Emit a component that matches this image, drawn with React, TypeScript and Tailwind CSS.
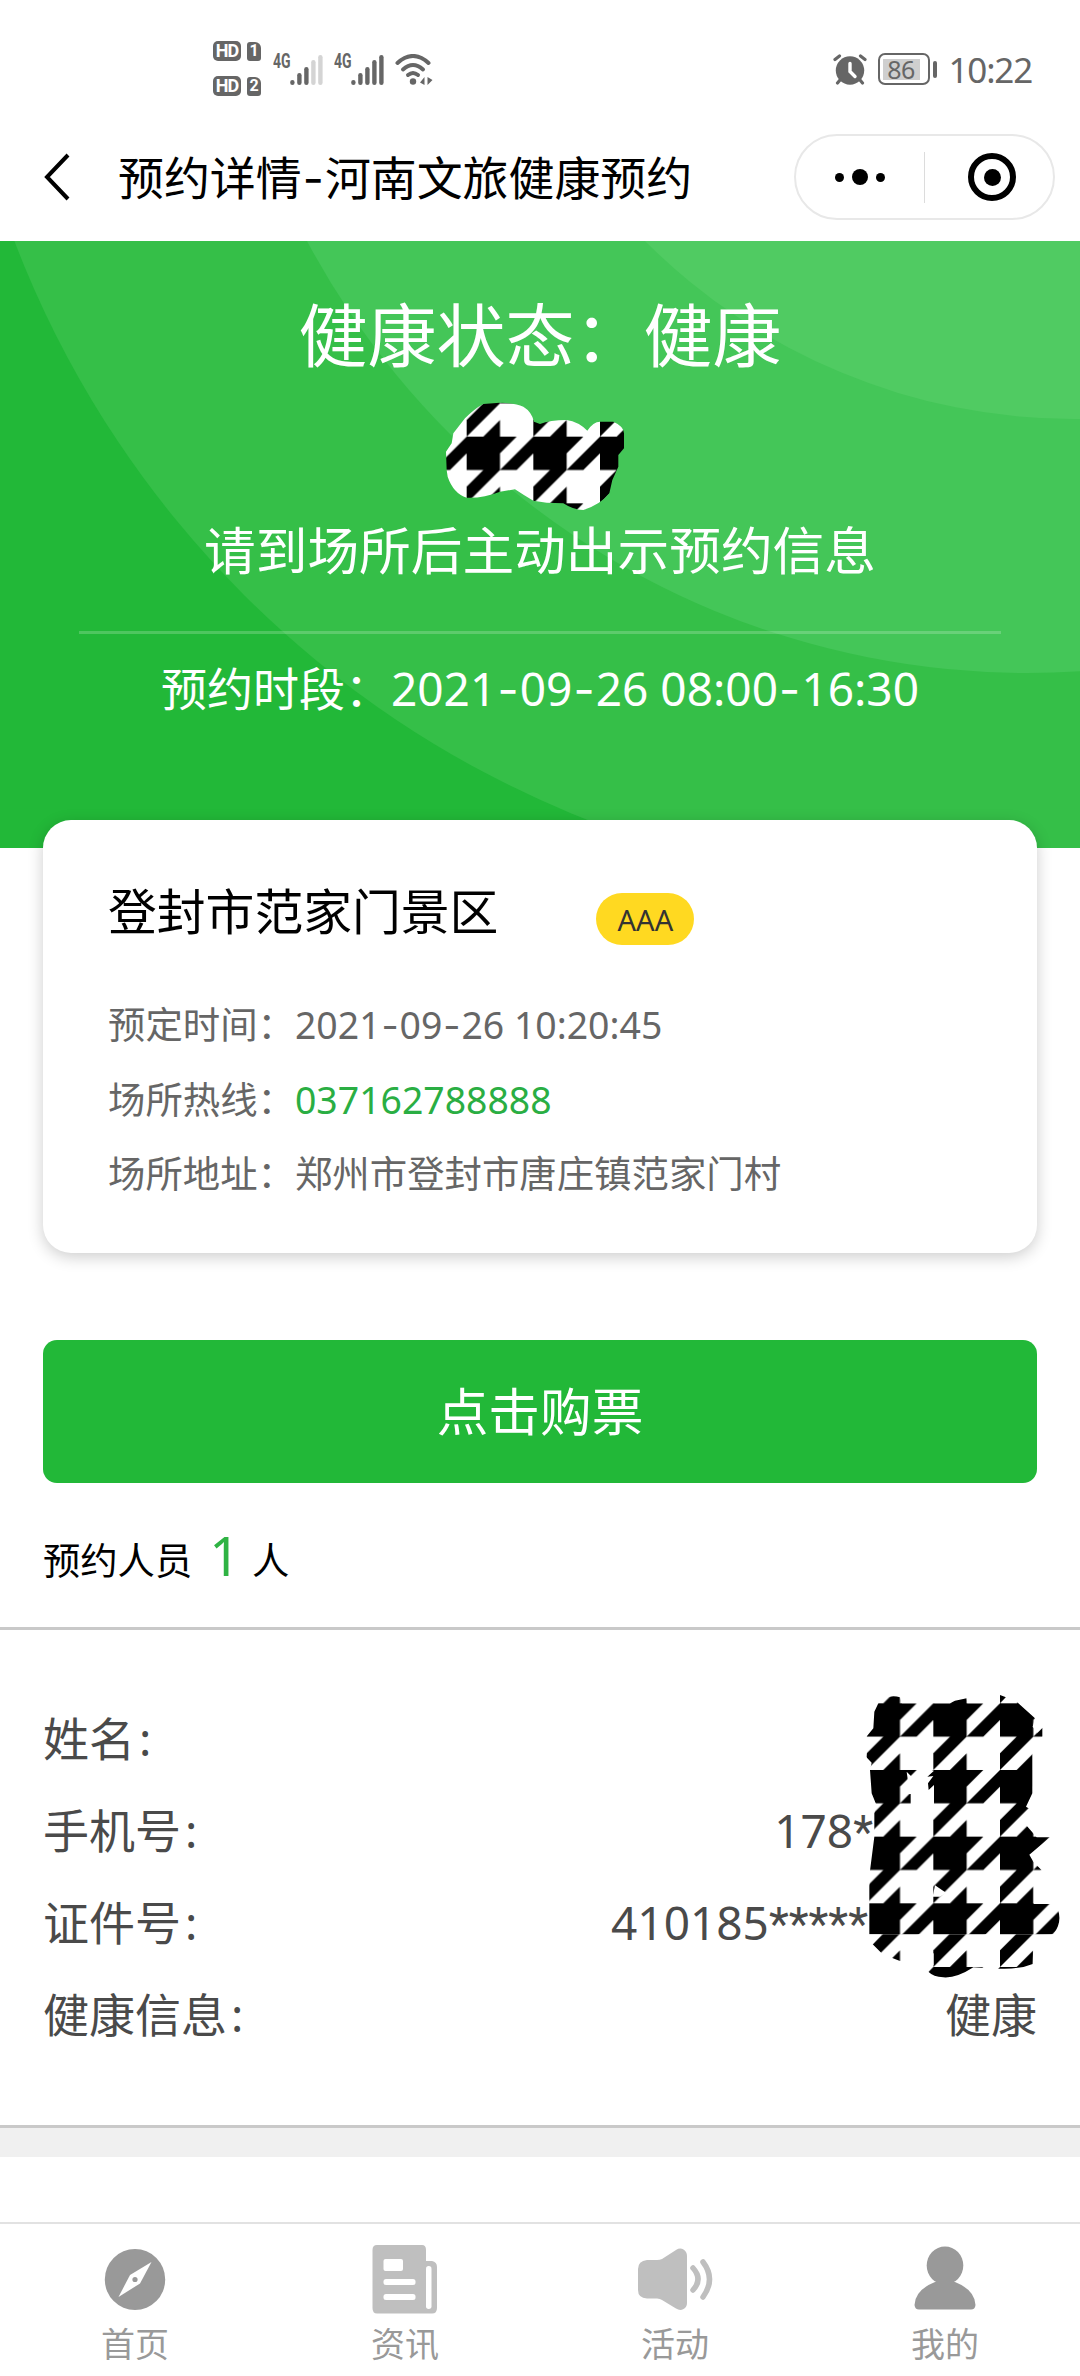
import React from 'react';

const HOUNDSTOOTH_TOP =
  'M140 270 L138 215 L155 190 L160 160 L195 115 Q225 85 250 72 L300 68 Q345 70 370 80 Q395 95 402 125 L420 132 Q450 120 500 120 Q535 125 562 152 Q580 125 600 125 L640 125 Q675 140 672 165 L672 205 L655 225 L655 260 L637 300 L628 340 Q600 375 550 390 Q520 390 490 370 L440 368 L400 362 Q370 345 345 328 L300 335 Q250 355 200 353 Q160 340 143 290 Z';

const HOUNDSTOOTH_SIDE =
  'M78 232 L100 205 L103 155 L115 130 Q145 100 180 112 L186 130 L330 130 L345 122 L380 115 L382 130 L480 130 L480 105 L498 112 L484 128 L530 125 L585 175 L578 200 L592 218 L607 203 L607 230 L577 240 L577 400 L558 440 L568 446 L545 480 L590 532 L630 532 L568 584 L580 605 L605 631 L581 640 L581 732 L635 732 L655 752 Q666 790 640 823 L581 825 L578 912 Q540 928 480 926 L400 922 Q350 955 310 952 Q280 950 265 935 L281 915 L281 880 L180 903 L155 893 L165 872 L125 880 L98 853 L125 823 L88 823 L88 680 L90 632 L103 530 L103 460 L108 432 L95 400 L90 330 L95 308 L78 290 L82 270 L120 232 Z';

const HoundstoothPattern: React.FC<{ id: string; shift?: number }> = ({ id, shift = 0 }) => (
  <pattern
    id={id}
    patternUnits="userSpaceOnUse"
    width="200"
    height="200"
    patternTransform={`translate(466.67 ${436.67 - shift}) scale(0.33333)`}
  >
    <rect width="200" height="200" fill="#fff" />
    <path
      fill="#000"
      d="M0 0H150L100 50V100H0Z M100 100H150L200 50V0Z M50 100H100L0 200V150Z M50 200L100 150V200Z"
    />
  </pattern>
);

const TopMask = () => (
  <svg width="280" height="154" viewBox="400 370 280 154">
    <defs>
      <HoundstoothPattern id="ht-top" />
      <clipPath id="clip-top">
        <path d={HOUNDSTOOTH_TOP} transform="translate(400 380) scale(0.33333)" />
      </clipPath>
    </defs>
    <rect x="400" y="370" width="280" height="154" fill="url(#ht-top)" clipPath="url(#clip-top)" />
  </svg>
);

const SideMask = () => (
  <svg className="absolute left-[840px] top-[30px]" width="240" height="340" viewBox="840 1660 240 340">
    <defs>
      <HoundstoothPattern id="ht-side" />
      <HoundstoothPattern id="ht-side-low" shift={3} />
      <clipPath id="clip-side">
        <path d={HOUNDSTOOTH_SIDE} transform="translate(840 1660) scale(0.33333)" />
      </clipPath>
    </defs>
    <g clipPath="url(#clip-side)">
      <rect x="840" y="1660" width="240" height="274.4" fill="url(#ht-side)" />
      <rect x="840" y="1934.4" width="240" height="66" fill="url(#ht-side-low)" />
      <g fill="#fff" transform="translate(840 1660) scale(0.33333)">
        <path d="M200 335L215 350L235 332H282L262 350L280 348L264 370L266 390L282 375V434H212V402L188 402L205 372Z" />
        <path d="M285 676L318 698L300 710H278Z" />
      </g>
    </g>
  </svg>
);

// Inter's hyphen is longer and sits higher, which suits the dates
const Num: React.FC<{ value: string }> = ({ value }) => (
  <>
    {value.split('-').map((part, i) => (
      <React.Fragment key={i}>
        {i > 0 && <span className="mx-[0.025em] font-['Inter',sans-serif]">-</span>}
        {part}
      </React.Fragment>
    ))}
  </>
);

const HdBadge: React.FC<{ sim: string }> = ({ sim }) => (
  <div className="flex items-center gap-1.5 font-['Roboto',sans-serif] font-bold text-white">
    <span className="flex h-5 w-7 items-center justify-center rounded-[5px] bg-[#666] text-[18px] leading-none tracking-tighter">HD</span>
    <span className="flex h-[19px] w-3.5 items-center justify-center rounded-[3px] rounded-tr-[6px] bg-[#666] text-[16px] leading-none">{sim}</span>
  </div>
);

const Signal: React.FC<{ level: number }> = ({ level }) => (
  <div className="flex items-start">
    <span className="w-[17px] origin-left scale-x-[0.7] font-['Roboto',sans-serif] text-[20px] font-bold leading-[14px] text-[#666]">4G</span>
    <svg width="33" height="31" viewBox="0 0 33 31">
      {[5, 12, 18, 25, 30].map((h, i) => (
        <rect key={i} x={i * 7 + 0.2} y={31 - h} width="4.4" height={h} rx="2.2" fill={i < level ? '#666' : '#d4d4d4'} />
      ))}
    </svg>
  </div>
);

const Wifi = () => (
  <svg width="38" height="31" viewBox="0 0 38 31" fill="none" stroke="#666" strokeWidth="4" strokeLinecap="round">
    <path d="M2.5 9Q18 -5 33.5 9" />
    <path d="M8 15.5Q18 6.5 28 15.5" />
    <path d="M13 21Q18 17 23 21" />
    <circle cx="18" cy="27.5" r="3.2" fill="#666" stroke="none" />
    <path d="M29.5 23V31L25 28.5ZM32.5 31V23L37.5 26Z" fill="#666" stroke="none" />
  </svg>
);

const AlarmClock = () => (
  <svg width="34" height="31" viewBox="0 0 34 31" fill="none" stroke="#666" strokeLinecap="round">
    <circle cx="17" cy="16.5" r="14.2" fill="#666" stroke="none" />
    <path d="M2 5.5L6.5 2M32 5.5L27.5 2" strokeWidth="3.2" />
    <path d="M7 26L4.5 29M27 26L29.5 29" strokeWidth="3.2" />
    <path d="M17 9.5V17.5L22 22.5" stroke="#fff" strokeWidth="3.4" />
  </svg>
);

const StatusBar = () => (
  <div className="flex h-[120px] items-center justify-between pl-[213px] pr-[48px] pt-[18px]">
    <div className="flex items-center">
      <div className="mt-[-1px] flex flex-col gap-[15px]">
        <HdBadge sim="1" />
        <HdBadge sim="2" />
      </div>
      <div className="ml-3 flex items-center gap-[11px]">
        <Signal level={3} />
        <Signal level={5} />
        <Wifi />
      </div>
    </div>
    <div className="flex items-center text-[#666]">
      <AlarmClock />
      <div className="ml-[11px] flex h-8 w-[52px] items-center rounded-[7px] border-[2.5px] border-[#666] pl-[3px]">
        <span className="flex h-[21px] w-[37px] items-center justify-center bg-[#cfcfcf] text-[25px] leading-none tracking-tight">86</span>
      </div>
      <div className="ml-[3px] h-[17px] w-1 rounded-sm bg-[#666]" />
      <span className="ml-[12px] text-[35px] leading-none tracking-[-1.2px]">10:22</span>
    </div>
  </div>
);

const NavBar = () => (
  <div className="flex h-[121px] items-center justify-between pb-[7px] pl-[43px] pr-[25px]">
    <div className="flex items-center">
      <svg width="28" height="48" viewBox="0 0 28 48" fill="none" stroke="#000" strokeWidth="4">
        <path d="M25 2L4 24L25 46" />
      </svg>
      <h1 className="ml-[47px] mt-[2px] text-[45.9px] leading-none text-black">
        <Num value="预约详情-河南文旅健康预约" />
      </h1>
    </div>
    <div className="flex h-[86px] w-[261px] items-center rounded-full border-2 border-[#e8e8e8]">
      <div className="flex w-32 items-center justify-center gap-2">
        <i className="size-[9px] rounded-full bg-black" />
        <i className="size-4 rounded-full bg-black" />
        <i className="size-[9px] rounded-full bg-black" />
      </div>
      <div className="h-[51px] w-px bg-[#dcdcdc]" />
      <div className="flex w-32 items-center justify-center pl-[6px]">
        <div className="flex size-12 items-center justify-center rounded-full border-[6px] border-black">
          <i className="size-[17px] rounded-full bg-black" />
        </div>
      </div>
    </div>
  </div>
);

const Banner = () => (
  <div className="relative h-[607px] overflow-hidden bg-[#22b838] text-white">
    <svg className="absolute inset-0" width="1080" height="607" viewBox="0 241 1080 607">
      <circle cx="957" cy="-119" r="1009" fill="#35bf48" />
      <circle cx="1027" cy="-143" r="816" fill="#44c658" />
      <circle cx="1074" cy="-187" r="606" fill="#50cb62" />
    </svg>
    <div className="relative flex flex-col items-center pt-[59px]">
      <p className="text-[69px] leading-[70px]">健康状态：健康</p>
      <TopMask />
      <p className="text-[51.7px] leading-[52px]">请到场所后主动出示预约信息</p>
      <div className="mt-[55px] h-[3px] w-[922px] bg-white/20" />
      <p className="mt-[31px] whitespace-nowrap text-[46px] leading-[46px]">
        预约时段：<Num value="2021-09-26 08:00-16:30" />
      </p>
    </div>
  </div>
);

const details = [
  { label: '预定时间：', value: '2021-09-26 10:20:45' },
  { label: '场所热线：', value: '037162788888', link: true },
  { label: '场所地址：', value: '郑州市登封市唐庄镇范家门村' },
];

const PlaceCard = () => (
  <div className="relative mx-[43px] -mt-7 h-[433px] rounded-[28px] bg-white px-[65px] pt-[57px] shadow-[0_4px_16px_rgba(0,0,0,0.2)]">
    <div className="flex items-center">
      <h2 className="text-[48.8px] leading-[54px] text-black">登封市范家门景区</h2>
      <span className="ml-[98px] mt-4 flex h-[52px] w-[98px] items-center justify-center rounded-full bg-[#ffd921] text-[29px] leading-none text-[#333]">
        AAA
      </span>
    </div>
    <div className="mt-[43px] text-[37.4px] leading-[74px] text-[#666]">
      {details.map(({ label, value, link }) => (
        <div key={label} className="flex">
          <span>{label}</span>
          <span className={link ? 'text-[#2aae43]' : ''}>
            <Num value={value} />
          </span>
        </div>
      ))}
    </div>
  </div>
);

const person = [
  { label: '姓名', value: '', pad: '' },
  { label: '手机号', value: '178*', pad: 'pr-[207px]' },
  { label: '证件号', value: '410185*****', pad: 'pr-[212px]' },
  { label: '健康信息', value: '健康', pad: 'pr-[43px]' },
];

const PersonInfo = () => (
  <div className="relative border-b-[3px] border-[#c9c9c9] pb-[65px] pt-[62px] text-[46px] leading-[92px] text-[#4a4a4a]">
    {person.map(({ label, value, pad }) => {
      const stars = value.indexOf('*');
      return (
        <div key={label} className={`flex h-[92px] justify-between pl-[43px] ${pad}`}>
          <span>
            {label}
            <span className="ml-1">:</span>
          </span>
          <span>
            {stars < 0 ? value : value.slice(0, stars)}
            {stars >= 0 && <span className="font-['Roboto',sans-serif]">{value.slice(stars)}</span>}
          </span>
        </div>
      );
    })}
    <SideMask />
  </div>
);

const CompassIcon = () => (
  <svg width="62" height="70" viewBox="0 0 62 70">
    <ellipse cx="31" cy="35.5" rx="30.2" ry="30.5" fill="#999" />
    <path d="M47.5 18L36 39.5L14.5 53L26 31Z" fill="#fff" />
    <circle cx="31" cy="35.5" r="2.6" fill="#999" />
  </svg>
);

const NewsIcon = () => (
  <svg width="66" height="70" viewBox="0 0 66 70">
    <path d="M5 1H50Q54 1 54 6V17H60Q65 18 65 23V64Q65 69.5 60 69.5H5Q0.5 69.5 0.5 64V6Q0.5 1 5 1Z" fill="#bfbfbf" />
    <rect x="11.5" y="15" width="19.5" height="12" rx="2" fill="#fff" />
    <rect x="11.5" y="35" width="32" height="6" rx="2.5" fill="#fff" />
    <rect x="11.5" y="50" width="32" height="6" rx="2.5" fill="#fff" />
    <rect x="54" y="22" width="5.5" height="43" rx="2.7" fill="#fff" />
  </svg>
);

const SpeakerIcon = () => (
  <svg width="76" height="70" viewBox="0 0 76 70">
    <path d="M10 16H20Q23 16 25 15L39 6Q43 3.5 46.5 5.5Q50 7.5 50 12V59Q50 63 46.5 65Q43 67 39 64.5L25 56Q23 54.5 20 54.5H10Q1 54 1 46V25Q1 17 10 16Z" fill="#bfbfbf" />
    <path d="M56 24Q66 35 56 46M66 18Q79 35 66 53" fill="none" stroke="#bfbfbf" strokeWidth="5.5" strokeLinecap="round" />
  </svg>
);

const UserIcon = () => (
  <svg width="62" height="70" viewBox="0 0 62 70" fill="#999">
    <ellipse cx="31" cy="21.5" rx="18.3" ry="19" />
    <path d="M21 38H41Q61 46 61.5 61Q61 65.5 57 65.5H5Q1 65.5 0.5 61Q1 46 21 38Z" />
  </svg>
);

const tabs = [
  { label: '首页', Icon: CompassIcon },
  { label: '资讯', Icon: NewsIcon },
  { label: '活动', Icon: SpeakerIcon },
  { label: '我的', Icon: UserIcon },
];

const TabBar = () => (
  <nav className="mt-auto grid h-[154px] grid-cols-4 border-t-2 border-[#e2e2e2] bg-white">
    {tabs.map(({ label, Icon }) => (
      <div key={label} className="flex flex-col items-center pt-5">
        <Icon />
        <span className="mt-[13px] text-[34px] leading-[34px] text-[#999]">{label}</span>
      </div>
    ))}
  </nav>
);

export default function App() {
  return (
    <div className="flex h-[2376px] w-[1080px] flex-col overflow-hidden bg-white font-['Noto_Sans','Noto_Sans_CJK_SC',sans-serif]">
      <StatusBar />
      <NavBar />
      <Banner />
      <PlaceCard />
      <button className="mx-[43px] mt-[87px] h-[143px] shrink-0 rounded-[14px] bg-[#22b838] text-[51.7px] leading-none text-white">
        点击购票
      </button>
      <div className="flex h-[147px] items-center border-b-[3px] border-[#c9c9c9] pl-[43px] pt-[11px] text-[37.3px] leading-none text-black">
        <span>预约人员</span>
        <span className="ml-[17px] mt-[-12px] text-[54px] text-[#2fb344]">1</span>
        <span className="ml-[12px]">人</span>
      </div>
      <PersonInfo />
      <div className="h-[29px] bg-[#f0f0f0]" />
      <TabBar />
    </div>
  );
}
